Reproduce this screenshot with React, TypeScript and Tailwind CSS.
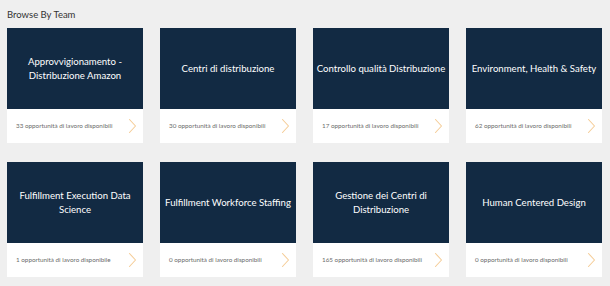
const TEAMS = [
  { name: 'Approvvigionamento - Distribuzione Amazon', count: 33 },
  { name: 'Centri di distribuzione', count: 30 },
  { name: 'Controllo qualità Distribuzione', count: 17 },
  { name: 'Environment, Health & Safety', count: 62 },
  { name: 'Fulfillment Execution Data Science', count: 1 },
  { name: 'Fulfillment Workforce Staffing', count: 0 },
  { name: 'Gestione dei Centri di Distribuzione', count: 165 },
  { name: 'Human Centered Design', count: 0 },
];

function Chevron() {
  return (
    <svg width="9" height="16" viewBox="0 0 9 16" fill="none" className="shrink-0">
      <polyline points="1.5,1.5 7.5,8 1.5,14.5" stroke="#f5cd98" strokeWidth="1.1" strokeLinecap="round" strokeLinejoin="round" />
    </svg>
  );
}

function TeamCard({ name, count }: { name: string; count: number }) {
  return (
    <div className="flex flex-col bg-white">
      <div className="h-[81px] bg-[#122a43] flex items-center justify-center px-[3px] text-center">
        <span className="text-white text-[9.6px] leading-[14px]">{name}</span>
      </div>
      <div className="h-[34px] flex items-center justify-between pl-[9px] pr-[6px]">
        <span className="text-[6.3px] text-[#6b6b6b] whitespace-nowrap">
          {count} {count === 1 ? 'opportunità di lavoro disponibile' : 'opportunità di lavoro disponibili'}
        </span>
        <Chevron />
      </div>
    </div>
  );
}

export default function App() {
  return (
    <div className="w-[610px] h-[286px] bg-[#efefef] px-[7px] pt-[8px] font-['Lato','Open_Sans',sans-serif]">
      <h2 className="text-[9.5px] leading-[14px] text-[#333] mb-[6px]">Browse By Team</h2>
      <div className="grid grid-cols-[repeat(4,136px)] gap-x-[17px] gap-y-[19px]">
        {TEAMS.map(t => (
          <TeamCard key={t.name} {...t} />
        ))}
      </div>
    </div>
  );
}
